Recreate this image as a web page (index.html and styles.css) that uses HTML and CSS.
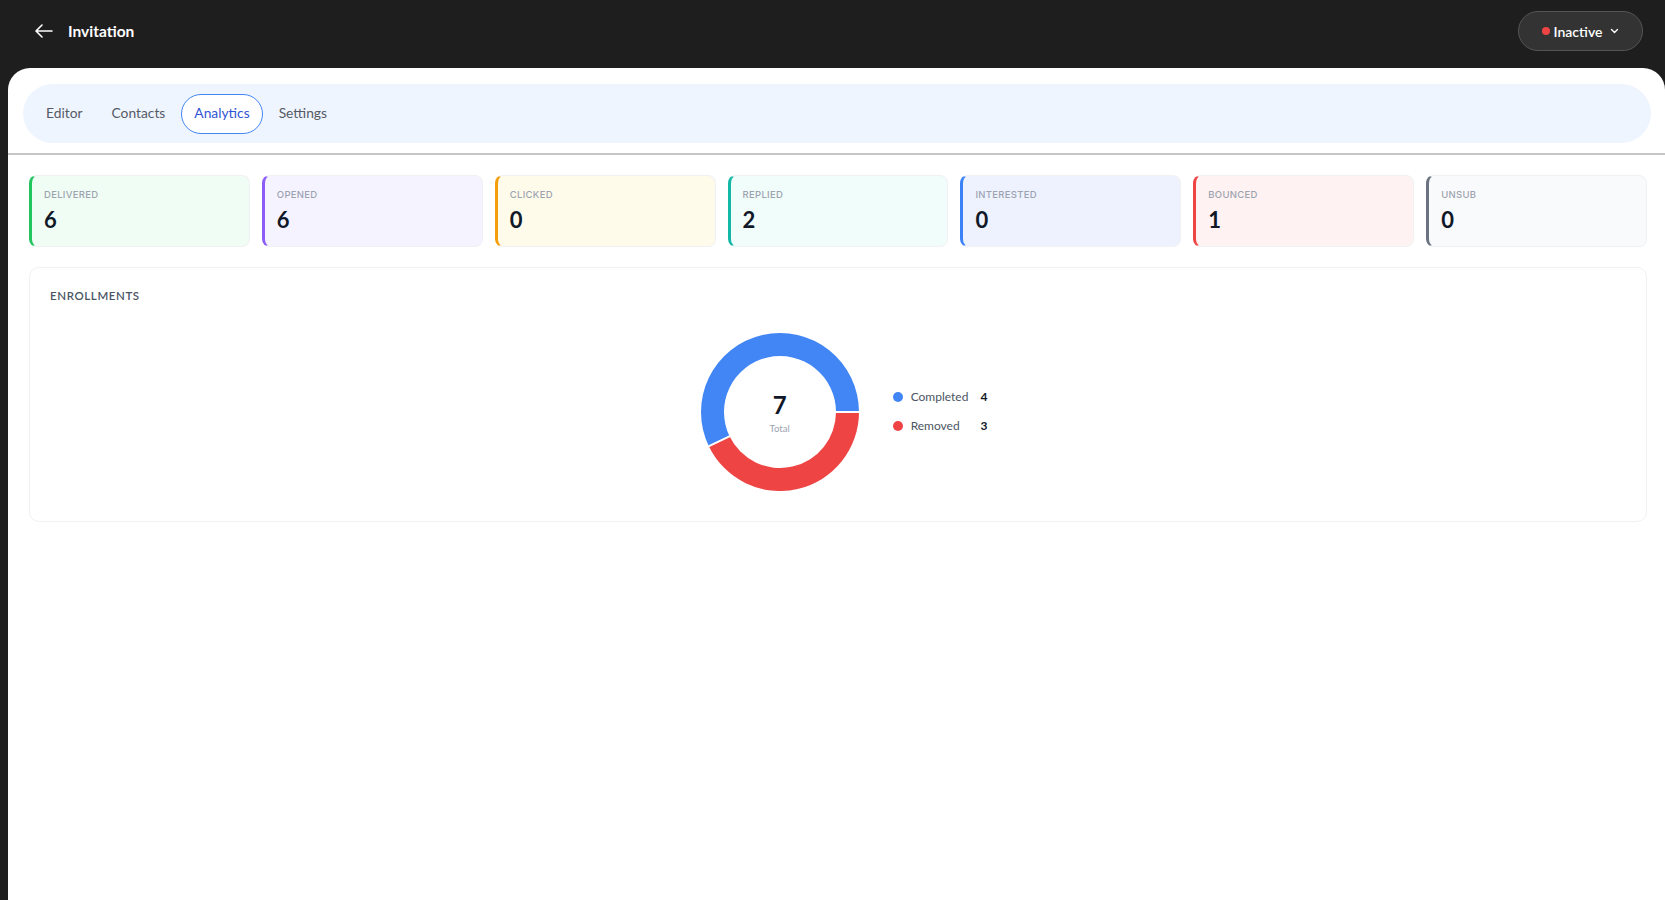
FILE: index.html
```html
<!DOCTYPE html>
<html lang="en">
<head>
<meta charset="utf-8">
<title>Invitation</title>
<link rel="stylesheet" href="styles.css">
</head>
<body>
<header class="topbar">
  <div class="title-group">
    <svg class="back" width="18" height="14" viewBox="0 0 18 14" fill="none" stroke="#fff" stroke-width="1.6" stroke-linecap="round" stroke-linejoin="round"><path d="M17 7H1.5M7 1L1 7l6 6"/></svg>
    <span class="title">Invitation</span>
  </div>
  <button class="status-btn"><span class="dot"></span>Inactive<svg class="chev" width="9" height="6" viewBox="0 0 9 6" fill="none" stroke="#fff" stroke-width="1.4" stroke-linecap="round" stroke-linejoin="round"><path d="M1.5 1.5L4.5 4.5 7.5 1.5"/></svg></button>
</header>
<main class="panel">
  <nav class="tabs">
    <span class="tab">Editor</span>
    <span class="tab">Contacts</span>
    <span class="tab active">Analytics</span>
    <span class="tab">Settings</span>
  </nav>
  <div class="divider"></div>
  <section class="stats">
    <div class="stat green"><div class="label">DELIVERED</div><div class="value">6</div></div>
    <div class="stat violet"><div class="label">OPENED</div><div class="value">6</div></div>
    <div class="stat amber"><div class="label">CLICKED</div><div class="value">0</div></div>
    <div class="stat teal"><div class="label">REPLIED</div><div class="value">2</div></div>
    <div class="stat blue"><div class="label">INTERESTED</div><div class="value">0</div></div>
    <div class="stat red"><div class="label">BOUNCED</div><div class="value">1</div></div>
    <div class="stat gray"><div class="label">UNSUB</div><div class="value">0</div></div>
  </section>
  <section class="enroll">
    <h3 class="enroll-title">ENROLLMENTS</h3>
    <div class="chart-row">
      <div class="donut">
        <svg width="158" height="158" viewBox="0 0 158 158">
          <g transform="translate(79 79)">
            <path d="M79 0 A79 79 0 1 0 -71.18 34.28 L -50.45 24.30 A56 56 0 1 1 56 0 Z" fill="#4285f4"/>
            <path d="M79 0 A79 79 0 0 1 -71.18 34.28 L -50.45 24.30 A56 56 0 0 0 56 0 Z" fill="#ef4444"/>
            <line x1="55" y1="0" x2="80" y2="0" stroke="#fff" stroke-width="2"/>
            <line x1="-49.55" y1="23.86" x2="-72.08" y2="34.71" stroke="#fff" stroke-width="2"/>
          </g>
        </svg>
        <div class="donut-center"><div class="total">7</div><div class="total-label">Total</div></div>
      </div>
      <div class="legend">
        <span class="ldot blue-dot"></span><span class="lname">Completed</span><span class="lval">4</span>
        <span class="ldot red-dot"></span><span class="lname">Removed</span><span class="lval">3</span>
      </div>
    </div>
  </section>
</main>
</body>
</html>
```
FILE: styles.css
```css
* { box-sizing: border-box; }
html, body { margin: 0; padding: 0; }
body {
  background: #1e1e1e;
  font-family: "Lato", "Noto Sans", sans-serif;
  color: #111827;
  overflow: hidden;
}
.topbar {
  height: 68px;
  display: flex;
  align-items: center;
  justify-content: space-between;
  padding: 0 22px 0 35px;
}
.title-group { display: flex; align-items: center; gap: 15px; margin-top: -6px; }
.back { display: block; }
.title { color: #fff; font-size: 15.5px; font-weight: 700; }
.status-btn {
  height: 40px;
  width: 125px;
  border-radius: 20px;
  background: #333333;
  border: 1px solid #555555;
  color: #fff;
  font-family: inherit;
  font-size: 14px;
  font-weight: 600;
  display: flex;
  align-items: center;
  justify-content: center;
  gap: 3px;
  padding: 0;
  margin-top: -6px;
}
.status-btn .dot { width: 8px; height: 8px; border-radius: 50%; background: #ef4444; margin-right: 1px; }
.status-btn .chev { margin-left: 5px; }
.panel {
  margin-left: 8px;
  background: #fff;
  border-radius: 22px 22px 0 0;
  min-height: 832px;
  padding-top: 16px;
}
.tabs {
  margin: 0 14px 0 15px;
  height: 59px;
  background: #eff5ff;
  border-radius: 30px;
  display: flex;
  align-items: center;
  gap: 3px;
  padding-left: 10px;
}
.tab {
  height: 40px;
  line-height: 36px;
  padding: 0 12px;
  font-size: 13.8px;
  color: #555b66;
  border: 1px solid transparent;
  border-radius: 20px;
}
.tab.active {
  background: #fff;
  color: #2f55d4;
  border-color: #4285f4;
}
.divider { height: 2px; background: #c6c6c6; margin-top: 10px; }
.stats {
  display: grid;
  grid-template-columns: repeat(7, 1fr);
  gap: 12px;
  padding: 0 18px 0 21px;
  margin-top: 20px;
}
.stat {
  height: 72px;
  border-radius: 8px;
  border: 1px solid #f0f1f3;
  border-left: 3px solid;
  padding: 13px 0 0 12px;
}
.label {
  font-family: "Inter", "Lato", sans-serif;
  font-size: 9.5px;
  font-weight: 500;
  color: #9ca3af;
  letter-spacing: 0.3px;
}
.value { font-size: 22px; font-weight: 700; color: #111827; margin-top: 6px; }
.green { background: #f0fdf4; border-left-color: #22c55e; }
.violet { background: #f5f3ff; border-left-color: #8b5cf6; }
.amber { background: #fffbeb; border-left-color: #f59e0b; }
.teal { background: #f0fdfa; border-left-color: #14b8a6; }
.blue { background: #eef2ff; border-left-color: #3b82f6; }
.red { background: #fef2f2; border-left-color: #ef4444; }
.gray { background: #f9fafb; border-left-color: #6b7280; }
.enroll {
  margin: 20px 18px 0 21px;
  height: 255px;
  border: 1px solid #f0f1f3;
  border-radius: 10px;
  padding: 21px 20px 0 20px;
}
.enroll-title {
  margin: 0;
  font-size: 11.5px;
  font-weight: 600;
  color: #4b5563;
  letter-spacing: 0.6px;
}
.chart-row {
  display: flex;
  justify-content: center;
  align-items: center;
  gap: 34px;
  margin-top: 31px;
  padding-left: 12px;
}
.donut { position: relative; width: 158px; height: 158px; }
.donut svg { display: block; }
.donut-center {
  position: absolute;
  inset: 0;
  display: flex;
  flex-direction: column;
  align-items: center;
  justify-content: center;
  padding-top: 2px;
}
.total { font-size: 24px; font-weight: 700; color: #111827; line-height: 1; }
.total-label { font-size: 9.5px; color: #9ca3af; margin-top: 6px; }
.legend {
  display: grid;
  grid-template-columns: 10px auto auto;
  column-gap: 8px;
  row-gap: 14px;
  align-items: center;
  margin-top: -2px;
}
.ldot { width: 10px; height: 10px; border-radius: 50%; }
.blue-dot { background: #4285f4; }
.red-dot { background: #ef4444; }
.lname { font-size: 12px; color: #4b5563; margin-right: 4px; }
.lval { font-size: 12px; font-weight: 700; color: #111827; }
```
